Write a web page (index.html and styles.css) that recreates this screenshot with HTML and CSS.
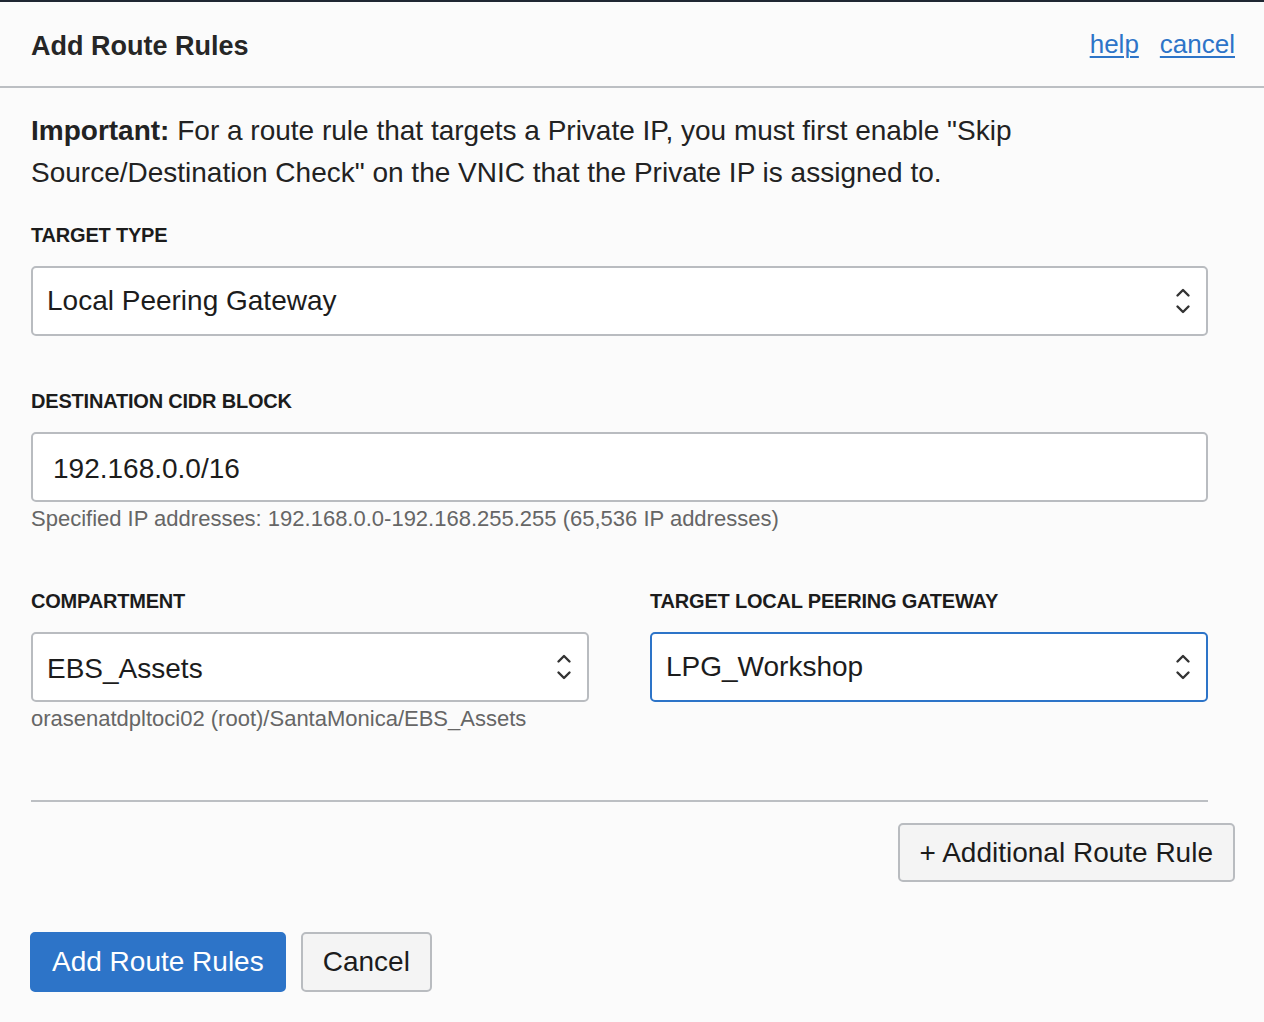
FILE: index.html
```html
<!DOCTYPE html>
<html lang="en">
<head>
<meta charset="utf-8">
<title>Add Route Rules</title>
<link rel="stylesheet" href="styles.css">
</head>
<body>
<div class="panel">
  <header class="panel-header">
    <h1 class="panel-title">Add Route Rules</h1>
    <nav class="header-links">
      <a href="#" class="link">help</a>
      <a href="#" class="link">cancel</a>
    </nav>
  </header>

  <main class="panel-body">
    <p class="notice"><strong>Important:</strong> For a route rule that targets a Private IP, you must first enable "Skip Source/Destination Check" on the VNIC that the Private IP is assigned to.</p>

    <div class="fields">
      <div class="field field-target">
        <label class="field-label">TARGET TYPE</label>
        <div class="control select">
          <span class="control-text">Local Peering Gateway</span>
          <svg class="chevrons" width="16" height="32" viewBox="0 0 16 32"><polyline points="2.5,10.5 8,5 13.5,10.5" /><polyline points="2.5,21.5 8,27 13.5,21.5" /></svg>
        </div>
      </div>

      <div class="field field-cidr">
        <label class="field-label">DESTINATION CIDR BLOCK</label>
        <div class="control input low">
          <span class="control-text">192.168.0.0/16</span>
        </div>
        <div class="hint">Specified IP addresses: 192.168.0.0-192.168.255.255 (65,536 IP addresses)</div>
      </div>

      <div class="field-row">
        <div class="field">
          <label class="field-label">COMPARTMENT</label>
          <div class="control select low">
            <span class="control-text">EBS_Assets</span>
            <svg class="chevrons" width="16" height="32" viewBox="0 0 16 32"><polyline points="2.5,10.5 8,5 13.5,10.5" /><polyline points="2.5,21.5 8,27 13.5,21.5" /></svg>
          </div>
          <div class="hint">orasenatdpltoci02 (root)/SantaMonica/EBS_Assets</div>
        </div>
        <div class="field">
          <label class="field-label">TARGET LOCAL PEERING GATEWAY</label>
          <div class="control select focused">
            <span class="control-text">LPG_Workshop</span>
            <svg class="chevrons" width="16" height="32" viewBox="0 0 16 32"><polyline points="2.5,10.5 8,5 13.5,10.5" /><polyline points="2.5,21.5 8,27 13.5,21.5" /></svg>
          </div>
        </div>
      </div>

      <hr class="divider">
    </div>

    <div class="extra-row">
      <button class="btn btn-secondary btn-extra">+ Additional Route Rule</button>
    </div>

    <div class="actions">
      <button class="btn btn-primary">Add Route Rules</button>
      <button class="btn btn-secondary">Cancel</button>
    </div>
  </main>
</div>
</body>
</html>
```

FILE: styles.css
```css
* {
  box-sizing: border-box;
}

html, body {
  margin: 0;
  padding: 0;
}

body {
  background: #fbfbfb;
  font-family: "Liberation Sans", Arial, Helvetica, sans-serif;
  color: #1c1c1c;
  border-top: 2px solid #1f2732;
  min-height: 1022px;
}

.panel-header {
  height: 86px;
  padding: 0 29px 0 31px;
  display: flex;
  align-items: center;
  justify-content: space-between;
  border-bottom: 2px solid #bcbfc3;
}

.panel-title {
  margin: 5px 0 0 0;
  font-size: 27px;
  font-weight: 700;
  color: #262626;
  letter-spacing: 0;
}

.header-links {
  display: flex;
  gap: 21px;
  margin-top: 0;
}

.link {
  font-size: 26px;
  color: #2d74c8;
  text-decoration: underline;
  text-underline-offset: 3px;
  text-decoration-thickness: 2px;
}

.panel-body {
  padding: 0 29px 0 31px;
}

.notice {
  margin: 22px 0 0 0;
  font-size: 28px;
  line-height: 42px;
  color: #222;
  max-width: 1000px;
}

.notice strong {
  font-weight: 700;
}

.fields {
  margin-right: 27px;
}

.field-label {
  display: block;
  font-size: 20px;
  line-height: 24px;
  font-weight: 700;
  color: #1c1c1c;
  letter-spacing: -0.2px;
  margin-bottom: 19px;
}

.field-target {
  margin-top: 29px;
}

.field-cidr {
  margin-top: 53px;
}

.control {
  height: 70px;
  background: #fff;
  border: 2px solid #b9bcc0;
  border-radius: 5px;
  display: flex;
  align-items: center;
  justify-content: space-between;
  font-size: 28px;
  color: #1c1c1c;
}

.select {
  padding: 0 15px 0 14px;
}

.input {
  padding: 0 20px;
}

.control.low {
  padding-top: 4px;
}

.control.focused {
  border-color: #2d74c8;
}

.chevrons {
  fill: none;
  stroke: #333;
  stroke-width: 2.4;
  stroke-linecap: round;
  stroke-linejoin: round;
  flex-shrink: 0;
}

.control.low .chevrons {
  margin-top: -4px;
}

.hint {
  margin-top: 4px;
  font-size: 22px;
  line-height: 26px;
  color: #666;
}

.field-row {
  margin-top: 57px;
  display: grid;
  grid-template-columns: 1fr 1fr;
  column-gap: 61px;
}

.divider {
  margin: 68px 0 0 0;
  border: 0;
  border-top: 2px solid #bcbfc3;
  height: 0;
}

.extra-row {
  display: flex;
  justify-content: flex-end;
  margin-top: 21px;
}

.btn {
  font-family: "Liberation Sans", Arial, Helvetica, sans-serif;
  font-size: 28px;
  border-radius: 5px;
  cursor: pointer;
  line-height: 1;
}

.btn-secondary {
  background: #f4f4f4;
  border: 2px solid #b9bcc0;
  color: #1c1c1c;
  padding: 0 20px;
  height: 60px;
}

.btn-extra {
  height: 59px;
  padding: 0 20px;
}

.btn-primary {
  background: #2d74c8;
  border: 2px solid #2d74c8;
  color: #fff;
  padding: 0 20px;
  height: 60px;
}

.actions {
  margin-top: 50px;
  display: flex;
  gap: 15px;
  margin-left: -1px;
}
```
